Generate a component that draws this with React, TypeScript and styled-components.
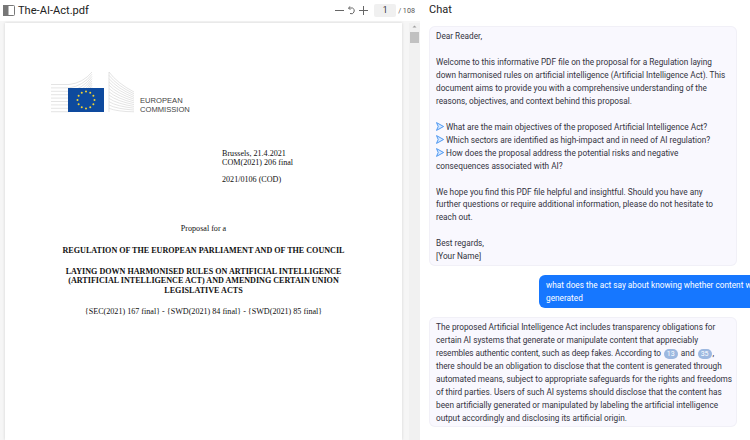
import React from "react";
import styled, { createGlobalStyle } from "styled-components";

const Global = createGlobalStyle`
  html, body { margin: 0; padding: 0; background: #fff; }
  body { font-family: "Roboto", "Noto Sans", sans-serif; }
`;

const Shell = styled.div`
  width: 750px;
  height: 440px;
  display: flex;
  overflow: hidden;
`;

const PdfPane = styled.section`
  width: 420px;
  flex: none;
  display: flex;
  flex-direction: column;
  background: #f6f6f6;
`;

const PdfBar = styled.header`
  height: 21px;
  flex: none;
  display: flex;
  align-items: center;
  background: #fff;
  padding: 0 5px 0 2px;
  margin-bottom: 2px;
`;

const FileTitle = styled.h1`
  margin: 0 0 0 3px;
  font-size: 11.1px;
  font-weight: 400;
  color: #222;
  flex: 1;
`;

const Tools = styled.div`
  display: flex;
  align-items: center;
  color: #666;
`;

const ToolIcon = styled.svg`
  width: 9px;
  height: 9px;
  flex: none;
  stroke: currentColor;
  fill: none;
  stroke-width: 1;
  & + & { margin-left: 3px; }
`;

const PageInput = styled.span`
  width: 22px;
  height: 13px;
  margin-left: 6px;
  background: #f0f0f0;
  border-radius: 2px;
  font-size: 8.5px;
  line-height: 13px;
  text-align: center;
  color: #333;
`;

const PageTotal = styled.span`
  margin-left: 2px;
  font-size: 7.2px;
  color: #555;
  white-space: nowrap;
`;

const Viewer = styled.div`
  flex: 1;
  min-height: 0;
  display: flex;
  padding-left: 5px;
`;

const Paper = styled.article`
  width: 397px;
  flex: none;
  background: #fff;
  box-shadow: 0 0 3px rgba(0, 0, 0, 0.14);
  font-family: "Liberation Serif", serif;
  color: #111;
  font-size: 8.1px;
  line-height: 9.4px;
  padding: 48px 0 0;
  box-sizing: border-box;
`;

const Logo = styled.div`
  display: flex;
  align-items: flex-end;
  margin-left: 46px;
  height: 42px;
`;

const LogoText = styled.div`
  margin: 0 0 -1px 5px;
  font-family: "Liberation Sans", sans-serif;
  font-size: 7.6px;
  line-height: 9px;
  color: #444;
`;

const Meta = styled.p`
  margin: 0 0 0 217px;
  &:first-of-type { margin-top: 36px; }
  & + & { margin-top: 7px; }
`;

const Center = styled.p<{ $gap: number; $bold?: boolean }>`
  margin: ${(p) => p.$gap}px 0 0;
  text-align: center;
  font-weight: ${(p) => (p.$bold ? 700 : 400)};
`;

const Scroll = styled.div`
  width: 11px;
  margin-left: 7px;
  flex: none;
  display: flex;
  flex-direction: column;
  align-items: center;
  background: #f1f1f1;
`;

const ScrollThumb = styled.div`
  width: 9px;
  height: 11px;
  margin-top: 2px;
  background: #c1c1c1;
`;

const ChatPane = styled.section`
  flex: 1;
  min-width: 0;
  display: flex;
  flex-direction: column;
  padding: 0 13px 0 9px;
`;

const ChatTitle = styled.h2`
  margin: 0;
  height: 26px;
  flex: none;
  font-size: 11px;
  line-height: 19px;
  font-weight: 400;
  color: #222;
`;

const Bubble = styled.div`
  width: 308px;
  box-sizing: border-box;
  flex: none;
  padding: 4.3px 7px 2.7px;
  background: #f9f8fe;
  box-shadow: inset 0 0 0 1px #f1f0f7;
  border-radius: 6px;
  font-size: 8.25px;
  line-height: 12.94px;
  color: #333340;
  white-space: pre;
`;

const Tight = styled.span`
  letter-spacing: -0.08px;
`;

const UserBubble = styled.div`
  flex: none;
  align-self: flex-start;
  margin: 9px 0 9px 110px;
  width: 240px;
  box-sizing: border-box;
  padding: 4.3px 7px 2.7px;
  background: #1677ff;
  border-radius: 6px;
  color: #fff;
  font-size: 8.25px;
  line-height: 12.94px;
  white-space: nowrap;
`;

const Cite = styled.span`
  display: inline-block;
  width: 14px;
  height: 10px;
  margin: 0 1px;
  border-radius: 6px;
  background: #9db8e0;
  color: #fff;
  font-size: 7px;
  line-height: 10px;
  text-align: center;
`;

const Prompt = styled.span`
  display: inline-flex;
  vertical-align: -1px;
  margin-right: 2px;
`;

const Arrow = () => (
  <Prompt>
    <svg width="8" height="9" viewBox="0 0 8 9">
      <path d="M.5.6 7.600 4.500.5 8.400 2.200 4.500Z" fill="#d6e8ff" stroke="#3f8fef" strokeWidth=".9" strokeLinejoin="round" />
    </svg>
  </Prompt>
);

const Emblem = () => (
  <svg width="84" height="42" viewBox="0 0 84 42">
    <g stroke="#d2d2d2" strokeWidth=".6" fill="none">
      {[0, 1, 2, 3, 4, 5, 6, 7, 8].map((i) => (
        <path key={i} d={`M0 ${13.500 + i * 3.4}H18Q32 ${12 + i * 3} 41 ${1 + i * 2.2}`} />
      ))}
      <path d="M58 1V41" />
      {[0, 1, 2, 3, 4, 5, 6, 7, 8, 9, 10, 11].map((i) => (
        <path key={i} d={`M58 ${1 + i * 3.3}Q66 ${12 + i * 2.6} 83 ${21 + i * 1.8}`} />
      ))}
    </g>
    <rect x="17" y="17" width="36" height="24" fill="#0e4a9e" />
    {Array.from({ length: 12 }).map((_, i) => {
      const a = (i * Math.PI) / 6;
      return <circle key={i} cx={35 + 8.5 * Math.cos(a)} cy={29 + 8.5 * Math.sin(a)} r="1" fill="#f3d433" />;
    })}
  </svg>
);

export default function App() {
  return (
    <>
      <Global />
      <Shell>
        <PdfPane>
          <PdfBar>
            <svg width="13" height="13" viewBox="0 0 13 13">
              <rect x="1.500" y="1.500" width="11" height="10" rx="1" fill="#fff" stroke="#777" />
              <rect x="1" y="1" width="5.500" height="11" fill="#777" />
            </svg>
            <FileTitle>The-AI-Act.pdf</FileTitle>
            <Tools>
              <ToolIcon viewBox="0 0 9 9"><path d="M0 4.500h9" /></ToolIcon>
              <ToolIcon viewBox="0 0 9 9"><path d="M1.500 2h4a2.800 2.800 0 1 1-2.500 5.500M1.500 2 3.300.3M1.500 2 3.300 3.800" /></ToolIcon>
              <ToolIcon viewBox="0 0 9 9"><path d="M0 4.500h9M4.500 0v9" /></ToolIcon>
              <PageInput>1</PageInput>
              <PageTotal>/ 108</PageTotal>
            </Tools>
          </PdfBar>
          <Viewer>
            <Paper>
              <Logo>
                <Emblem />
                <LogoText>EUROPEAN<br />COMMISSION</LogoText>
              </Logo>
              <Meta>Brussels, 21.4.2021<br />COM(2021) 206 final</Meta>
              <Meta>2021/0106 (COD)</Meta>
              <Center $gap={40}>Proposal for a</Center>
              <Center $gap={12} $bold>REGULATION OF THE EUROPEAN PARLIAMENT AND OF THE COUNCIL</Center>
              <Center $gap={12} $bold>LAYING DOWN HARMONISED RULES ON ARTIFICIAL INTELLIGENCE<br />(ARTIFICIAL INTELLIGENCE ACT) AND AMENDING CERTAIN UNION<br />LEGISLATIVE ACTS</Center>
              <Center $gap={12}>{"{SEC(2021) 167 final} - {SWD(2021) 84 final} - {SWD(2021) 85 final}"}</Center>
            </Paper>
            <Scroll>
              <svg width="7" height="7" viewBox="0 0 7 7"><path d="M1.500 4.500 3.500 2.500l2 2Z" fill="#a0a0a0" /></svg>
              <ScrollThumb />
            </Scroll>
          </Viewer>
        </PdfPane>
        <ChatPane>
          <ChatTitle>Chat</ChatTitle>
          <Bubble>
            {"Dear Reader,\n\nWelcome to this informative PDF file on the proposal for a Regulation laying\ndown harmonised rules on artificial intelligence (Artificial Intelligence Act). This\ndocument aims to provide you with a comprehensive understanding of the\nreasons, objectives, and context behind this proposal.\n\n"}
            <Arrow />{"What are the main objectives of the proposed Artificial Intelligence Act?\n"}
            <Arrow />{"Which sectors are identified as high-impact and in need of AI regulation?\n"}
            <Arrow />{"How does the proposal address the potential risks and negative\nconsequences associated with AI?\n\n"}
            {"We hope you find this PDF file helpful and insightful. Should you have any\nfurther questions or require additional information, please do not hesitate to\nreach out.\n\nBest regards,\n[Your Name]"}
          </Bubble>
          <UserBubble>what does the act say about knowing whether content was<br />generated</UserBubble>
          <Bubble>
            {"The proposed Artificial Intelligence Act includes transparency obligations for\ncertain AI systems that generate or manipulate content that appreciably\n"}<Tight>{"resembles authentic content, such as deep fakes. According to "}</Tight><Cite>13</Cite> and <Cite>35</Cite>{",\nthere should be an obligation to disclose that the content is generated through\nautomated means, subject to appropriate safeguards for the rights and freedoms\nof third parties. Users of such AI systems should disclose that the content has\nbeen artificially generated or manipulated by labeling the artificial intelligence\noutput accordingly and disclosing its artificial origin."}
          </Bubble>
        </ChatPane>
      </Shell>
    </>
  );
}
